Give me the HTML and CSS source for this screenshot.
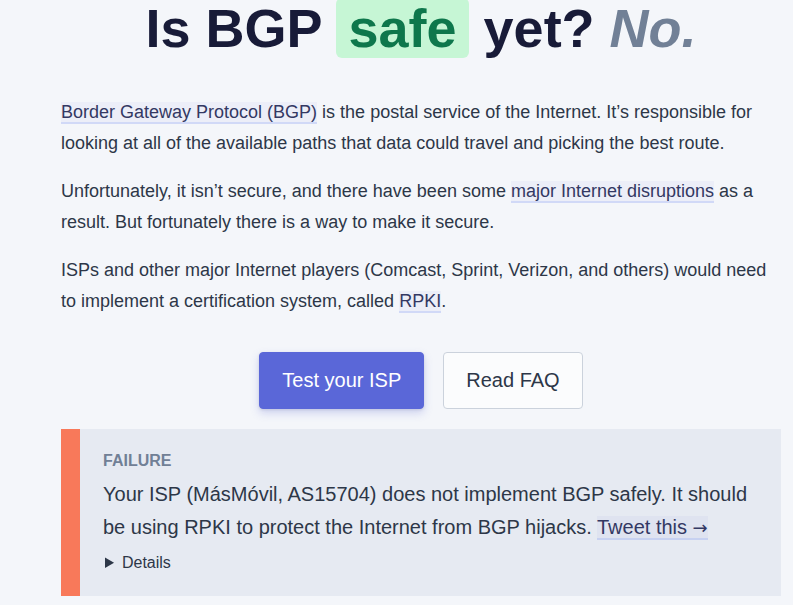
FILE: index.html
```html
<!DOCTYPE html>
<html lang="en">
<head>
<meta charset="utf-8">
<title>Is BGP safe yet? No.</title>
<link rel="stylesheet" href="styles.css">
</head>
<body>
<main class="wrap">
  <h1 class="hero">Is BGP <span class="badge">safe</span> yet? <em class="answer">No.</em></h1>

  <p class="text"><a class="link" href="#">Border Gateway Protocol (BGP)</a> is the postal service of the Internet. It’s responsible for looking at all of the available paths that data could travel and picking the best route.</p>
  <p class="text">Unfortunately, it isn’t secure, and there have been some <a class="link" href="#">major Internet disruptions</a> as a result. But fortunately there is a way to make it secure.</p>
  <p class="text">ISPs and other major Internet players (Comcast, Sprint, Verizon, and others) would need to implement a certification system, called <a class="link" href="#">RPKI</a>.</p>

  <div class="actions">
    <button class="btn btn-primary" type="button">Test your ISP</button>
    <button class="btn btn-secondary" type="button">Read FAQ</button>
  </div>

  <section class="result">
    <div class="result-label">FAILURE</div>
    <p class="result-text">Your ISP (MásMóvil, AS15704) does not implement BGP safely. It should be using RPKI to protect the Internet from BGP hijacks. <a class="link" href="#">Tweet this <span class="arrow">→</span></a></p>
    <details class="result-details">
      <summary>Details</summary>
    </details>
  </section>
</main>
</body>
</html>
```

FILE: styles.css
```css
html, body {
  margin: 0;
  padding: 0;
}

body {
  background: #f4f6fa;
  color: #2d3748;
  font-family: "Liberation Sans", Arial, sans-serif;
  overflow: hidden;
}

.wrap {
  width: 720px;
  margin-left: 61px;
}

.hero {
  margin: -4px 0 0;
  font-size: 54px;
  line-height: 64px;
  font-weight: 700;
  text-align: center;
  color: #181b38;
}

.badge {
  background: #c6f6d5;
  color: #0e774c;
  padding: 0 12px;
  border-radius: 6px;
}

.answer {
  color: #718096;
  font-style: italic;
}

.text {
  margin: 0 0 18px;
  font-size: 18px;
  line-height: 30.6px;
  color: #2d3748;
}

.hero + .text {
  margin-top: 37px;
}

.link {
  color: #333863;
  text-decoration: none;
  background: rgba(90, 103, 216, 0.05);
  border-bottom: 2px solid rgba(127, 156, 245, 0.25);
}

.arrow {
  font-family: "DejaVu Sans", sans-serif;
  font-size: 18px;
}

.actions {
  display: flex;
  justify-content: center;
  gap: 19px;
  margin-top: 35px;
}

.btn {
  font-family: "Liberation Sans", Arial, sans-serif;
  font-size: 20px;
  line-height: 29px;
  padding: 13px 22px;
  border-radius: 4px;
  cursor: pointer;
}

.btn-primary {
  background: #5a67d8;
  color: #ffffff;
  border: 1px solid #5a67d8;
  box-shadow: 0 4px 8px rgba(90, 103, 216, 0.25), 0 1px 3px rgba(0, 0, 0, 0.1);
}

.btn-secondary {
  background: #fbfcfd;
  color: #2d3748;
  border: 1px solid #cbd2dc;
}

.result {
  margin-top: 20px;
  background: #e6eaf2;
  border-left: 19px solid #f8795a;
  padding: 20px 24px 21px 23px;
}

.result-label {
  font-size: 16px;
  line-height: 24px;
  font-weight: 700;
  color: #718096;
}

.result-text {
  margin: 5px 0 0;
  font-size: 20px;
  line-height: 33px;
  color: #2d3748;
}

.result-details {
  margin-top: 7px;
  font-size: 16px;
  line-height: 24px;
  color: #2d3748;
}

.result-details summary {
  cursor: pointer;
  padding-left: 2px;
}
```
